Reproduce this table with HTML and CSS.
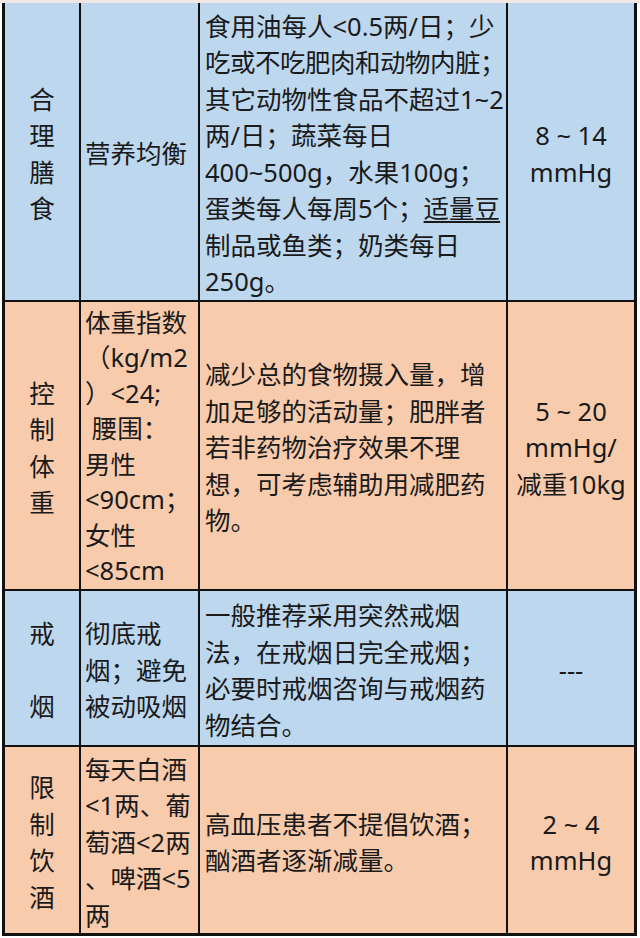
FILE: index.html
```html
<!DOCTYPE html>
<html lang="zh-CN">
<head>
<meta charset="utf-8">
<title>生活方式干预</title>
<link rel="stylesheet" href="styles.css">
</head>
<body>
<div class="strip"></div>
<div class="table">
  <div class="cell blue c1"><div class="t">合<br>理<br>膳<br>食</div></div>
  <div class="cell blue c2"><div class="t">营养均衡</div></div>
  <div class="cell blue c3"><div class="t">食用油每人&lt;0.5两/日；少<br><span class="tight">吃或不吃肥肉和动物内脏；</span><br>其它动物性食品不超过1~2<br>两/日；蔬菜每日<br>400~500g，水果100g；<br>蛋类每人每周5个；<span class="ul">适量豆</span><br>制品或鱼类；奶类每日<br>250g。</div></div>
  <div class="cell blue c4"><div class="t">8 ~ 14<br>mmHg</div></div>

  <div class="cell salmon c1"><div class="t">控<br>制<br>体<br>重</div></div>
  <div class="cell salmon c2"><div class="t dense">体重指数<br>（kg/m2<br>）&lt;24;<br>&nbsp;腰围：<br>男性<br>&lt;90cm；<br>女性<br>&lt;85cm</div></div>
  <div class="cell salmon c3"><div class="t">减少总的食物摄入量，增<br>加足够的活动量；肥胖者<br>若非药物治疗效果不理<br>想，可考虑辅助用减肥药<br>物。</div></div>
  <div class="cell salmon c4"><div class="t">5 ~ 20<br>mmHg/<br>减重10kg</div></div>

  <div class="cell blue c1"><div class="t">戒<br><br>烟</div></div>
  <div class="cell blue c2"><div class="t">彻底戒<br>烟；避免<br>被动吸烟</div></div>
  <div class="cell blue c3"><div class="t">一般推荐采用突然戒烟<br>法，在戒烟日完全戒烟；<br>必要时戒烟咨询与戒烟药<br>物结合。</div></div>
  <div class="cell blue c4"><div class="t">---</div></div>

  <div class="cell salmon c1"><div class="t">限<br>制<br>饮<br>酒</div></div>
  <div class="cell salmon c2"><div class="t">每天白酒<br>&lt;1两、葡<br>萄酒&lt;2两<br>、啤酒&lt;5<br>两</div></div>
  <div class="cell salmon c3"><div class="t">高血压患者不提倡饮酒；<br>酗酒者逐渐减量。</div></div>
  <div class="cell salmon c4"><div class="t">2 ~ 4<br>mmHg</div></div>
</div>
</body>
</html>
```

FILE: styles.css
```css
html, body {
  margin: 0;
  padding: 0;
  background: #ffffff;
}

body {
  width: 640px;
  height: 938px;
  overflow: hidden;
  font-family: "Noto Sans", "Noto Sans CJK SC", sans-serif;
  font-size: 25.5px;
  line-height: 36.5px;
  color: #1a1a1a;
}

.strip {
  height: 3px;
  background: #f1e7e5;
}

.table {
  display: grid;
  grid-template-columns: 74px 117px 306px 126px;
  grid-template-rows: 297px 287px 154px 186px;
  gap: 2px;
  padding: 0 3px 3px 3px;
  margin-left: 2px;
  width: fit-content;
  background: #111111;
}

.cell {
  display: flex;
  flex-direction: column;
  justify-content: center;
  white-space: nowrap;
  overflow: hidden;
}

.t {
  padding-top: 4px;
}

.t.dense {
  padding-top: 2px;
  line-height: 35.5px;
}

.tight {
  letter-spacing: -0.5px;
}

.blue {
  background: #bdd7ee;
}

.salmon {
  background: #f8cbad;
}

.c1,
.c4 {
  text-align: center;
  align-items: center;
}

.c2 {
  padding-left: 4px;
}

.c3 {
  padding-left: 5px;
}

.ul {
  text-decoration: underline;
  text-decoration-thickness: 1.5px;
  text-underline-offset: 3px;
}
```
